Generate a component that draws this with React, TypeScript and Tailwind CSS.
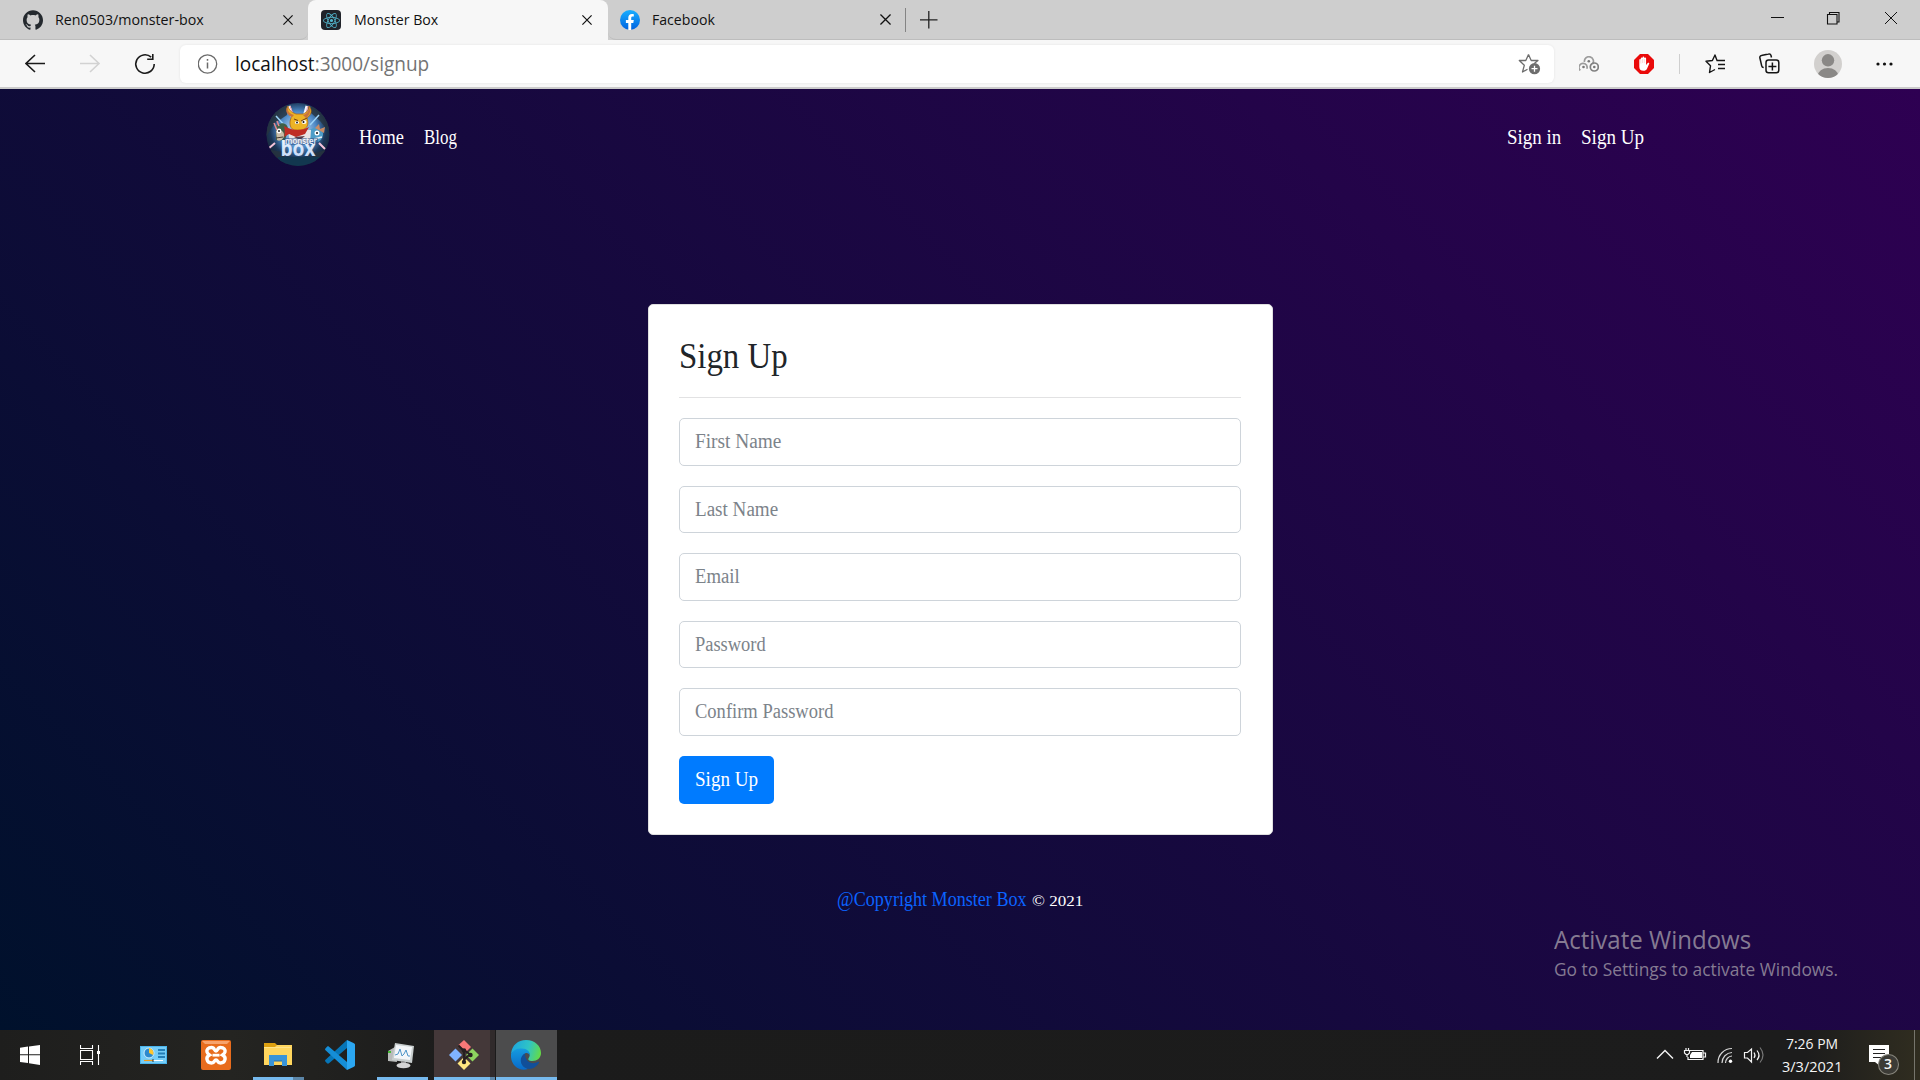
import { useLayoutEffect, useRef, useState } from "react";
import type { ReactNode } from "react";
import { SiGithub, SiReact } from "react-icons/si";

/* Condenses or widens a single line of text so that it fills `width` pixels. */
function Fit({ width, className = "", children }: { width: number; className?: string; children: ReactNode }) {
  const ref = useRef<HTMLSpanElement>(null);
  const [scale, setScale] = useState(1);
  useLayoutEffect(() => {
    if (ref.current && ref.current.offsetWidth) setScale(width / ref.current.offsetWidth);
  }, [width]);
  return (
    <span className={"inline-block shrink-0 whitespace-nowrap " + className} style={{ width }}>
      <span ref={ref} className="inline-block origin-left" style={{ transform: `scaleX(${scale})` }}>
        {children}
      </span>
    </span>
  );
}

function Close({ size = 10 }: { size?: number }) {
  return (
    <svg width={size} height={size} viewBox="0 0 10 10" className="shrink-0">
      <path d="M0.4 0.4 9.6 9.6M9.6 0.4 0.4 9.6" stroke="#111" strokeWidth="1.2" fill="none" />
    </svg>
  );
}

function TabBar() {
  return (
    <div className="flex h-10 bg-[#cecece] text-[15px] leading-5 text-[#111]">
      <div className="flex h-10 w-[308px] items-center rounded-br-lg border-b border-[#bdbdbd] pl-[23px] pr-[15px]">
        <SiGithub size={20} color="#24292e" />
        <Fit width={149} className="mb-0.5 ml-3">Ren0503/monster-box</Fit>
        <span className="ml-auto flex"><Close /></span>
      </div>
      <div className="flex h-10 w-[300px] items-center rounded-t-lg bg-[#f7f7f7] pl-[13px] pr-4">
        <span className="flex size-5 items-center justify-center rounded-sm bg-[#20232a]">
          <SiReact size={17} color="#53b9d1" />
        </span>
        <Fit width={84} className="mb-0.5 ml-[13px]">Monster Box</Fit>
        <span className="ml-auto flex"><Close /></span>
      </div>
      <div className="flex h-10 flex-1 items-center rounded-bl-lg border-b border-[#bdbdbd] pl-3">
        <svg width="20" height="20" viewBox="0 0 20 20">
          <defs>
            <linearGradient id="fb" x1="0" y1="0" x2="0" y2="1">
              <stop offset="0" stopColor="#19afff" />
              <stop offset="1" stopColor="#0062e0" />
            </linearGradient>
          </defs>
          <circle cx="10" cy="10" r="10" fill="url(#fb)" />
          <path d="M8.3 19.9v-7H5.9V10h2.4V7.8c0-2.5 1.4-3.8 3.6-3.8.9 0 1.9.2 1.9.2v2.4h-1.2c-1.1 0-1.4.7-1.4 1.4v2h2.6l-.5 2.9h-2.1v7z" fill="#fff" />
        </svg>
        <Fit width={63} className="mb-0.5 ml-3">Facebook</Fit>
        <span className="ml-[165px] flex"><Close size={11} /></span>
        <span className="ml-[14px] h-6 w-px bg-[#848484]" />
        <svg width="18" height="18" viewBox="0 0 18 18" className="ml-[14px]">
          <path d="M0 8.800h17.500M8.800 0v17.500" stroke="#222" strokeWidth="1.3" />
        </svg>
        <svg width="128" height="14" viewBox="0 0 128 14" className="-mt-1 ml-auto mr-[22px]" fill="none" stroke="#111">
          <path d="M1 6.500h13" />
          <path d="M57.500 3.500h9.500v9.500h-9.500zM59.500 3v-1.500h9.500v9.500h-1.500" strokeWidth="1.1" />
          <path d="m115 1 12 12M127 1l-12 12" />
        </svg>
      </div>
    </div>
  );
}

function Toolbar() {
  return (
    <div className="flex h-[49px] items-center border-b-2 border-[#cbcbcb] bg-[#f7f7f7]">
      <svg width="130" height="22" viewBox="0 0 130 22" className="ml-[25px] shrink-0" fill="none" stroke="#1a1a1a" strokeWidth="1.6">
        <path d="M20 10.500H1M10 2l-9 8.500 9 8.500" />
        <path d="M55 10.500h19M65 2l9 8.500-9 8.500" stroke="#d2d2d2" />
        <path d="M129.200 11a9.200 9.200 0 1 1-3-6.800M127.800 1v5.200h-5.600" />
      </svg>
      <div className="ml-[25px] flex h-[38px] w-[1374px] shrink-0 items-center rounded-md bg-white pl-[18px] pr-[13px] shadow-[0_0_3px_rgba(0,0,0,0.08)]">
        <svg width="20" height="20" viewBox="0 0 20 20" fill="none" stroke="#6a6a6a" strokeWidth="1.3">
          <circle cx="9.500" cy="10" r="9.200" />
          <path d="M9.500 8.500v6M9.500 5v1.700" strokeWidth="1.500" />
        </svg>
        <Fit width={194} className="ml-[17px] text-[19.500px] leading-7">
          <span className="text-[#111]">localhost</span>
          <span className="text-[#747474]">:3000/signup</span>
        </Fit>
        <svg width="23" height="22" viewBox="0 0 23 22" className="ml-auto" fill="none">
          <path d="m10.500 1.500 2.700 6h6.800l-3.500 2.800M10.500 1.500l-2.700 6H1.300l5 4.800L4.500 19l5-2.800" stroke="#6d6d6d" strokeWidth="1.300" strokeLinejoin="round" />
          <circle cx="16.500" cy="15.700" r="5.600" fill="#6d6d6d" />
          <path d="M13.500 15.700h6M16.500 12.700v6" stroke="#fff" strokeWidth="1.300" />
        </svg>
      </div>
      <svg width="20" height="16" viewBox="0 0 20 16" className="ml-[25px]" fill="none" stroke="#9c9c9c" strokeWidth="1.700">
        <path d="M5.500 6a4.500 4.500 0 1 1 8 2M1.300 14.300a4 4 0 1 1 6.500-1.500" />
        <circle cx="15.300" cy="11" r="4" stroke="#808080" />
        <g fill="#777" stroke="none"><circle cx="9.800" cy="5.300" r="1.300" /><circle cx="4.500" cy="11" r="1.300" /><circle cx="15.300" cy="11" r="1.300" /></g>
      </svg>
      <svg width="20" height="20" viewBox="0 0 20 20" className="ml-[35px]">
        <path d="M6 0h8l6 6v8l-6 6H6l-6-6V6z" fill="#ea0a0a" />
        <path d="M5.300 10.500V6c0-1.200 1.500-1.200 1.500 0V4.300c0-1.200 1.700-1.200 1.700 0v-.8c0-1.200 1.800-1.200 1.800 0v.8c0-1.200 1.800-1.200 1.800 0V11l1.600-2c.8-.8 1.900-.2 1.500.8L13 14.800c-.8 1.500-1.800 2-3.500 2-3 0-4.200-1.500-4.200-4z" fill="#fff" />
        <path d="M6.800 6v3.500M8.500 5v4M10.300 5v4" stroke="#f7b5b5" strokeWidth=".5" />
      </svg>
      <span className="ml-[25px] h-5 w-px bg-[#cfcfcf]" />
      <svg width="21" height="20" viewBox="0 0 21 20" className="ml-[25px]" fill="none" stroke="#151515" strokeWidth="1.400" strokeLinejoin="round">
        <path d="M12 6.500 10 1 7.400 6.500 1 7.300l4.500 4.500-1 6.700 5.500-3M11.500 6.500H20M13 10.500h7M13 14.500h7" />
      </svg>
      <svg width="21" height="21" viewBox="0 0 21 21" className="ml-[33px] mr-px" fill="none" stroke="#151515" strokeWidth="1.500">
        <rect x="7" y="7" width="12.800" height="12.800" rx="2.500" />
        <path d="M13.400 9.500v8M9.400 13.400h8M4.700 14.500c-1.200 0-1.800-.7-2-1.700L.9 5c-.3-1.200.4-2.200 1.500-2.400L9.500 1c1.200-.3 2.200.3 2.500 1.500l.5 2" />
      </svg>
      <svg width="28" height="28" viewBox="0 0 28 28" className="ml-[33px]">
        <defs><clipPath id="av"><circle cx="14" cy="14" r="14" /></clipPath></defs>
        <g clipPath="url(#av)">
          <path d="M0 0h28v28H0z" fill="#d2d0ce" />
          <circle cx="14" cy="10.300" r="6.200" fill="#8a8886" />
          <ellipse cx="14" cy="26" rx="10.200" ry="8" fill="#8a8886" />
        </g>
      </svg>
      <svg width="17" height="4" viewBox="0 0 17 4" className="ml-[34px]" fill="#111">
        <circle cx="2" cy="2" r="1.600" /><circle cx="8.500" cy="2" r="1.600" /><circle cx="15" cy="2" r="1.600" />
      </svg>
    </div>
  );
}

function Logo() {
  return (
    <svg width="64" height="64" viewBox="0 0 64 64" className="mb-1 shrink-0">
      <defs>
        <clipPath id="lc"><circle cx="32" cy="31.500" r="31.500" /></clipPath>
        <radialGradient id="lg" cx=".5" cy=".42" r=".58">
          <stop offset="0" stopColor="#d9f0ff" /><stop offset=".5" stopColor="#4c87c4" /><stop offset=".75" stopColor="#1c3657" /><stop offset="1" stopColor="#17222f" />
        </radialGradient>
        <linearGradient id="bx" x1="0" y1="0" x2="0" y2="1"><stop offset="0" stopColor="#fff" /><stop offset="1" stopColor="#b9d2f6" /></linearGradient>
      </defs>
      <g clipPath="url(#lc)">
        <path d="M0 0h64v64H0z" fill="url(#lg)" />
        <path d="M0 0h21v12L9 20 0 34zM64 0H45v10l9 8 10 12zM0 46l16 3 6 15H0zM64 46l-15 4-5 14h20z" fill="#27333e" opacity=".8" />
        <path d="M12 54h42v10H12z" fill="#12374f" />
        <path d="m10 13 11 12M53 12l-9 10" stroke="#9ed4f8" strokeWidth="1.500" />
        <path d="m23 3 4 13M41 3l-3 11" stroke="#f3f6ff" strokeWidth="3" /><path d="m24 3 3 8M42 3l-2 7" stroke="#ef9aa9" strokeWidth="1" />
        <path d="m2 46 7-6M59 46l-6-6" stroke="#f4c3da" strokeWidth="2" />
        <path d="M10 23c5-5 12-3 12 3l-3 12-9-1z" fill="#3f6047" />
        <path d="M10 28c4-2 8 0 8 4s-4 7-7 5z" fill="#c9bda8" /><circle cx="13" cy="28" r="2.400" fill="#fff" /><circle cx="13" cy="28" r="1" fill="#222" /><path d="m10 35 7-1" stroke="#45382e" />
        <path d="M8 20l3 7M11 18l2 5" stroke="#e58a90" strokeWidth="1.500" />
        <path d="M44 27c6-5 14-1 13 5s-6 9-13 6z" fill="#4d9dc8" /><path d="m49 25 4-4 1 5 5-2-1 6" fill="#c98c66" /><circle cx="51" cy="30" r="2.500" fill="#fff" /><circle cx="51" cy="30" r="1" fill="#111" /><path d="m48 36 8-2" stroke="#e8eef4" strokeWidth="1.500" />
        <path d="M22 27h23l-1 13H24z" fill="#e9e4e4" />
        <path d="M26 13c-5-2-6-7-4-10 1 4 3 6 8 8h7c5-2 6-5 6-8 4 5 2 9-2 12 2 6 1 11-6 12h-7c-5-2-5-9-2-14z" fill="#edb325" stroke="#a75c12" strokeWidth=".7" />
        <path d="M21 4c1 5 3 7 7 8l-2 2c-5-2-7-6-5-10zM43 4c0 4-2 7-6 8l3 3c4-3 5-7 3-11z" fill="#c9743d" />
        <ellipse cx="38" cy="19" rx="2.500" ry="2" fill="#fff" /><ellipse cx="31" cy="19.500" rx="2" ry="1.600" fill="#fff" /><circle cx="37.500" cy="19" r="1" fill="#111" /><circle cx="31" cy="19.500" r=".9" fill="#111" /><path d="m35 18 6-3M32 17.500l-4-1.500" stroke="#713b13" />
        <path d="M18 23c9 5 17 5 25 1l-4 7-9 3-7-3-5 3c1-4 1-7 0-11z" fill="#bf2c24" />
        <path d="m28 34 6 3 5-4" fill="#5a3b45" />
        <path d="M17 35h35v7H25v-2h-8z" fill="#26457a" opacity=".5" />
      </g>
      <text fontFamily="Open Sans, sans-serif" fill="#f2f6ff">
        <tspan x="19" y="40.500" textLength="32" lengthAdjust="spacingAndGlyphs" fontSize="8" fontWeight="600">monster</tspan>
        <tspan x="14.500" y="53.300" textLength="35" lengthAdjust="spacingAndGlyphs" fontSize="22" fontWeight="700" fill="url(#bx)">box</tspan>
      </text>
    </svg>
  );
}

const fields: [string, number][] = [
  ["First Name", 86], ["Last Name", 83], ["Email", 45], ["Password", 71], ["Confirm Password", 138],
];

function Page() {
  return (
    <main className="relative h-[941px] bg-[linear-gradient(45deg,#00112c_0%,#2e0052_100%)] font-['Liberation_Serif',serif]">
      <nav className="flex h-24 items-center pl-[266px] pr-[276px] text-[20px] leading-8 text-white">
        <Logo />
        <Fit width={45} className="mb-px ml-[29px]">Home</Fit>
        <Fit width={33} className="mb-px ml-5">Blog</Fit>
        <Fit width={54} className="mb-px ml-auto">Sign in</Fit>
        <Fit width={63} className="mb-px ml-5">Sign Up</Fit>
      </nav>
      <section className="mx-auto mt-[119px] h-[531px] w-[625px] rounded-[5px] border border-[#dfdfdf] bg-white pl-[30px] pr-[31px] pt-[30px]">
        <h1 className="h-[62px] text-[35px] leading-[44px] text-[#212529]"><Fit width={109}>Sign Up</Fit></h1>
        <hr className="border-[#e2e2e3]" />
        <form className="mt-[20px] flex flex-col gap-5">
          {fields.map(([label, width]) => (
            <div key={label} className="flex h-[47.5px] items-center rounded-[5px] border border-[#ced4da] px-[15px] text-[20px] leading-8 text-[#7c838a]">
              <Fit width={width} className="mb-px">{label}</Fit>
            </div>
          ))}
          <button type="button" className="flex h-12 w-[95px] items-center justify-center rounded-[5px] bg-[#007bff] text-[20px] leading-8 text-white">
            <Fit width={63} className="mb-px">Sign Up</Fit>
          </button>
        </form>
      </section>
      <footer className="mt-12 flex items-baseline justify-center gap-[5px] text-[20px] leading-8 text-white">
        <Fit width={190} className="text-[#0b63ff]">@Copyright Monster Box</Fit>
        <Fit width={51} className="text-[15px] font-medium">© 2021</Fit>
      </footer>
      <aside className="absolute left-[1554px] top-[833px] flex flex-col font-['Open_Sans',sans-serif] text-[#857b92]">
        <Fit width={197} className="text-[25px] leading-[35px]">Activate Windows</Fit>
        <Fit width={284} className="text-[18.5px] leading-6">Go to Settings to activate Windows.</Fit>
      </aside>
    </main>
  );
}

function TaskIcons() {
  return (
    <>
      <svg width="20" height="20" viewBox="0 0 20 20" fill="#fff" className="ml-5">
        <path d="M0 2.800 8 1.600v7.700H0zM9 1.400 20 0v9.300H9zM0 10.300h8v7.800l-8-1.200zM9 10.300h11V20L9 18.300z" />
      </svg>
      <svg width="21" height="20" viewBox="0 0 21 20" className="ml-10" fill="none" stroke="#fff" strokeWidth="1.100">
        <path d="M.5 0v3.500h12V0M.5 5.500h12v9H.5zM.5 20v-3.500h12V20M18.500 0v20" />
        <path d="M17 6h3v3h-3z" fill="#fff" stroke="none" />
      </svg>
      <svg width="27" height="18" viewBox="0 0 27 18" className="ml-[39px]">
        <path d="M0 0h27v18H0z" fill="#4ab5ec" /><path d="M1 1h25v16H1z" fill="#75cdf8" />
        <circle cx="9" cy="7" r="5" fill="#2d89cd" stroke="#ccefff" /><path d="M9 7V2a5 5 0 0 1 4 7z" fill="#ffc62d" />
        <path d="M18 3h7v2h-7zM18 6.500h7v2h-7zM18 10h7v2h-7z" fill="#247fb8" /><path d="M4 14.500h9" stroke="#f29a18" strokeWidth="1.200" /><path d="M13 14.500h10" stroke="#fff" /><path d="M13 13v3" stroke="#333" />
      </svg>
      <svg width="30" height="30" viewBox="0 0 30 30" className="ml-[34px]">
        <rect width="30" height="30" rx="2" fill="#e86c1d" /><path d="M1 1h28l-3 3H4z" fill="#f7a36d" />
        <path d="M10.500 7.500c-3.500 0-5 2-4.500 4.500.3 1.500 1.500 2.200 2.500 3-2 1-3 2.500-2.500 4.500.5 2.300 2 3.500 4.500 3.500 3.500 0 2.500-3 4.500-3s1 3 4.500 3c2.500 0 4-1.200 4.500-3.500.5-2-.5-3.500-2.500-4.500 1-.8 2.200-1.500 2.500-3 .5-2.500-1-4.500-4.500-4.500s-2.500 3.500-4.500 3.500-1-3.500-4.500-3.500z" fill="none" stroke="#fff" strokeWidth="3.400" /><path d="M11.500 15.200h7" stroke="#fff" strokeWidth="2.800" />
      </svg>
      <div className="relative ml-[22px] flex h-[50px] w-[51px] pl-[11px] pt-[13px]">
        <svg width="28" height="24" viewBox="0 0 28 24">
          <path d="M0 0h11l2 2v4H0z" fill="#dda010" /><path d="M0 4h11l2-2h15v20H0z" fill="#ffd65e" /><path d="M0 4h27v1H0z" fill="#ffe38b" />
          <path d="M5 23V12h18v11h-5v-5h-8v5z" fill="#3994d8" /><path d="M10 18h8" stroke="#226da9" />
        </svg>
        <span className="absolute bottom-0 left-0 h-[3px] w-10 bg-[#76b9ed]" />
        <span className="absolute bottom-0 left-10 h-[3px] w-[11px] bg-[#5c86a8]" />
      </div>
      <svg width="30" height="30" viewBox="0 0 30 30" className="ml-[21px]">
        <path d="M22 0v8L4 23.300c-.7.500-1.500.4-2-.1L.4 21.600c-.5-.6-.5-1.400.1-1.900z" fill="#0675b7" />
        <path d="M22 30v-8L4 6.700c-.7-.5-1.500-.4-2 .1L.4 8.400c-.5.600-.5 1.400.1 1.900z" fill="#158ed7" />
        <path d="m22 0 6.500 3c1 .5 1.500 1 1.500 2v20c0 1-.5 1.500-1.500 2L22 30z" fill="#2ba7f2" />
      </svg>
      <div className="ml-[22px] flex h-[50px] w-[51px] border-b-[3px] border-[#76b9ed] pl-2.5 pt-[13px]">
        <svg width="28" height="26" viewBox="0 0 28 26">
          <path d="M1 8 8 4l2 15-9-1z" fill="#b9bbba" /><path d="M1 8h3v2H1z" fill="#44bb33" />
          <path d="m8 0 19 3-2 17-20-3z" fill="#c9cfcf" /><path d="m9 2 16 2-2 13L7 15z" fill="#f3f6f9" />
          <path d="m8 12 3-1 2-5 2 7 2-2 2-4 2 6 2 0" fill="none" stroke="#4c94c8" />
          <path d="m14 18 5 1v2h-5z" fill="#999" /><ellipse cx="16.500" cy="22.500" rx="7" ry="2.800" fill="#d4d4d4" />
        </svg>
      </div>
      <div className="ml-[6px] flex h-[50px] w-[56px] border-b-[3px] border-[#76b9ed] bg-[#443839] pl-[15px] pt-2.5">
        <svg width="30" height="30" viewBox="0 0 30 30">
          <path d="m15 0 7 7-5 5-7.500-7z" fill="#f97878" /><path d="m6.500 8.500 6.500 6.500-6.500 6.500L0 15z" fill="#80b3ff" />
          <path d="m23.500 8.500 6.500 6.500-6.500 6.500L17 15z" fill="#8dd35f" /><path d="m15 17 6.500 6.500L15 30l-6.500-6.500z" fill="#ffe680" />
          <path d="m9.500 5.500 5.500 5.500v11M15 10l7 5M15 20l5-5" fill="none" stroke="#251f20" strokeWidth="1.900" /><circle cx="15" cy="10.500" r="2.200" fill="#251f20" /><circle cx="21.500" cy="15" r="2.200" fill="#251f20" /><circle cx="15" cy="22" r="2.200" fill="#251f20" />
        </svg>
      </div>
      <div className="mr-px h-[50px] w-[5px] border-b-[3px] border-[#5c86a8] bg-[#302a2b]" />
      <div className="flex h-[50px] w-[61px] border-b-[3px] border-[#76b9ed] bg-[#4c4c4d] pl-[15px] pt-2.5">
        <svg width="30" height="30" viewBox="0 0 30 30">
          <defs>
            <linearGradient id="e1" x1="0" y1=".4" x2="1" y2=".6"><stop offset="0" stopColor="#1ca6df" /><stop offset=".55" stopColor="#2fc4c5" /><stop offset="1" stopColor="#65dc45" /></linearGradient>
            <linearGradient id="e2" x1="0" y1="0" x2="0" y2="1"><stop offset="0" stopColor="#159be0" /><stop offset="1" stopColor="#096ac8" /></linearGradient>
          </defs>
          <path d="M0 14C1 5 7 0 15 0c9 0 15 6 15 13 0 5-4 8-8.500 8-4 0-5-1.500-3.500-3.500 2-3 0-7-5-7C7 10 2 11 0 14z" fill="url(#e1)" />
          <path d="M0 14c2-4 6-6 11-5.500 5 0 8 3 8 7-1-2-3-3-5-2-5 3-4 12 3 15.500C8 32-1 25 0 14z" fill="url(#e2)" />
          <path d="M14 13.500c-8 4-4 17 6 15.300 3.500-.8 6.300-3 8-6 .4-.8-.2-1.200-1-.8-6 3-13 0-13-8.500z" fill="#114f99" />
        </svg>
      </div>
    </>
  );
}

function Taskbar() {
  return (
    <div className="flex h-[50px] items-center bg-[linear-gradient(90deg,#1e1e1d_0%,#242421_12%,#1b1b1b_25%,#1c1c1c_94%,#302d20_100%)] text-[#f5f5f5]">
      <TaskIcons />
      <svg width="109" height="20" viewBox="0 0 109 20" className="ml-auto" fill="none" stroke="#f4f4f4" strokeWidth="1.200">
        <path d="m1 13.500 8-8 8 8" strokeWidth="1.400" />
        <path d="M34 5.500h13v9H32V12M47.500 8h2v4h-2M28.500 5.500h5v2.500l-1.500 1.500h-2L28.500 8zM30 3v2M32.500 3v2M31 10v2" /><path d="M36 7h10v6H34v-3z" fill="#fff" stroke="none" />
        <path d="M62 18a14 14 0 0 1 14-14.500M66 18A10.500 10.500 0 0 1 76 7.500M69.500 18a7 7 0 0 1 6.500-7" stroke="#d6d6d6" /><circle cx="74.500" cy="16.300" r="1.700" fill="#fff" stroke="none" />
        <path d="M88.500 7.500h3l4-3.500v13l-4-4h-3zM98 7.500q2 3 0 5.500M101 5.500q4 5 0 9.500" /><path d="M104 2.500q6 7.500 0 15" stroke="#777" />
      </svg>
      <div className="ml-[17px] flex w-[60px] flex-col items-center text-[15px] leading-[23px]">
        <Fit width={52}>7:26 PM</Fit>
        <Fit width={60}>3/3/2021</Fit>
      </div>
      <div className="relative ml-[27px] h-[50px] w-[31px]">
        <svg width="31" height="50" viewBox="0 0 31 50">
          <path d="M0 15h20v17h-9v4l-5-4H0z" fill="#fff" /><path d="M4 19.500h12M4 23.500h12M4 27.500h8" stroke="#222" strokeWidth="1.100" />
          <circle cx="19.500" cy="34.500" r="10" fill="#3c3b36" stroke="#87857c" strokeWidth="1.100" />
        </svg>
        <span className="absolute left-[9px] top-[24px] w-5 text-center text-[14px] font-semibold leading-5">3</span>
      </div>
      <span className="ml-[14px] mr-[5px] h-[50px] w-px bg-[#76756c]" />
    </div>
  );
}

export default function App() {
  return (
    <div className="h-[1080px] w-[1920px] overflow-hidden font-['Open_Sans',sans-serif]">
      <TabBar />
      <Toolbar />
      <Page />
      <Taskbar />
    </div>
  );
}
